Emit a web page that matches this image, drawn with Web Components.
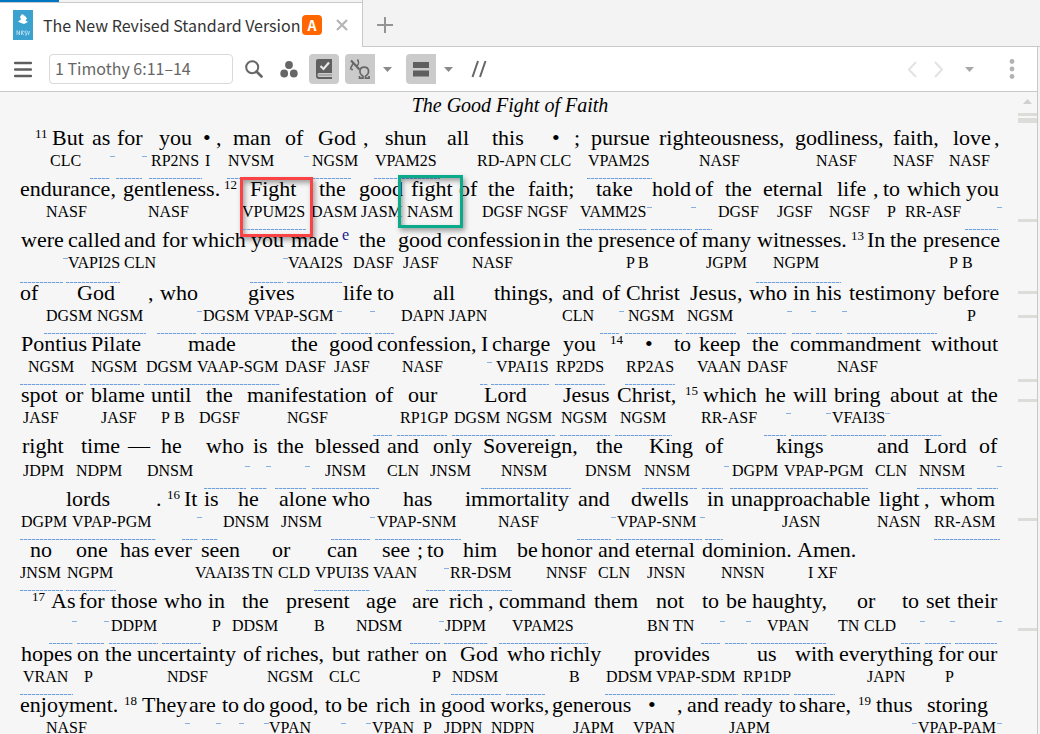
<!DOCTYPE html>
<html lang="en">
<head>
<meta charset="utf-8">
<title>The New Revised Standard Version</title>
<style>
  html,body{
    height:100%;
    margin:0;
  }
  body{
    background:#f3f3f3;
    font-family:"Noto Sans CJK SC","Noto Sans",sans-serif;
    color:#333;
    overflow:hidden;
  }
</style>
</head>
<body>
<reader-window>
  <reader-tab slot="tabs" badge="A">The New Revised Standard Version</reader-tab>
  <reader-toolbar slot="toolbar" reference="1 Timothy 6:11–14"></reader-toolbar>
  <bible-passage heading="The Good Fight of Faith"></bible-passage>
  <scroll-gutter slot="gutter"></scroll-gutter>
</reader-window>

<script>
const icons={
  menu:`<svg width="18" height="17"><path d="M1 2h16M1 8.500h16M1 15h16" stroke="#5f5f5f" stroke-width="2.400" stroke-linecap="round"/></svg>`,
  search:`<svg width="18" height="18" fill="none" stroke="#666"><circle cx="7.2" cy="7.2" r="6" stroke-width="2"/><path d="M11.5 11.5L16.5 16.5" stroke-width="2.6" stroke-linecap="round"/></svg>`,
  dots:`<svg width="18" height="18" fill="#666"><circle cx="9" cy="5" r="3.9"/><circle cx="4.2" cy="13.5" r="3.9"/><circle cx="13.8" cy="13.5" r="3.9"/></svg>`,
  book:`<svg width="18" height="22"><path d="M3 1H17V15H4Q2.5 15 2.5 17T4 19H17V21H4Q1 21 1 18V3Q1 1 3 1Z" fill="#5f5f5f"/><path d="M3.5 17H17" stroke="#8a8a8a" stroke-width="1"/><path d="M5.5 8L8.5 11L14 4.5" fill="none" stroke="#e6e6e6" stroke-width="2.2"/></svg>`,
  lang:`<svg width="22" height="22" fill="none" stroke="#666"><path d="M2 2.5L10.5 11.5" stroke-width="2.2"/><path d="M1.5 11.5C1.5 8 4 8 4 4.5" stroke-width="1.6"/><path d="M7.5 8C10 6.5 10.5 5 8.5 1.5M2 11.5H4" stroke-width="1.6"/><path d="M10.5 18V20.2H14V18.2C9.5 15.5 10 9.2 15.2 9.2S21 15.5 16.5 18.2V20.2H20V18" stroke-width="1.7"/></svg>`,
  split:`<svg width="16" height="16" fill="#5f5f5f"><path d="M0 1h16v6H0zM0 9.500h16v6H0z"/></svg>`,
  slashes:`<svg width="16" height="18" stroke="#666" stroke-width="2"><path d="M1.500 17L7 1M9 17L14.500 1"/></svg>`,
  caret:`<svg width="9" height="5"><path d="M0 0H9L4.500 5Z" fill="currentColor"/></svg>`,
  back:`<svg width="9" height="17"><path d="M8 1L1 8.500L8 16" fill="none" stroke="#e3e3e3" stroke-width="2"/></svg>`,
  forward:`<svg width="9" height="17"><path d="M1 1L8 8.500L1 16" fill="none" stroke="#e3e3e3" stroke-width="2"/></svg>`,
  more:`<svg width="6" height="20" fill="#b3b3b3"><circle cx="3" cy="2.500" r="2.400"/><circle cx="3" cy="10" r="2.400"/><circle cx="3" cy="17.500" r="2.400"/></svg>`,
  close:`<svg width="12" height="12"><path d="M1 1L11 11M11 1L1 11" stroke="#b5b5b5" stroke-width="2.200"/></svg>`,
  plus:`<svg width="16" height="16"><path d="M8 0V16M0 8H16" stroke="#949494" stroke-width="2"/></svg>`
};

// x positions are in units of the text column, which runs from 20 to 1000
const COLUMN_START=20;
const COLUMN_END=1000;

// "^" is a verse number, "~" a footnote, "_" a link mark in the tag row
const lines=[
  {
    rules:"",
    words:"35:^11 52:But 92:as 117:for 159:you 203:• 216:, 233:man 285:of 318:God 363:, 385:shun 447:all 492:this 552:• 574:; 591:pursue 659:righteousness, 795:godliness, 893:faith, 953:love 994:,",
    tags:"50:CLC 110:_ 142:_ 151:RP2NS 205:I 228:NVSM 304:_ 312:NGSM 375:VPAM2S 477:RD-APN 540:CLC 588:VPAM2S 699:NASF 816:NASF 893:NASF 949:NASF"
  },
  {
    rules:"90-110 116-142 149-202 227-240 312-351 374-440 587-652",
    words:"20:endurance, 123:gentleness. 224:^12 250:Fight 319:the 359:good 411:fight 459:of 488:the 528:faith; 596:take 652:hold 695:of 725:the 763:eternal 837:life 873:, 883:to 907:which 966:you",
    tags:"46:NASF 148:NASF 242:VPUM2S 311:DASM 361:JASM 407:NASM 482:DGSF 527:NGSF 580:VAMM2S 647:_ 691:_ 718:DGSF 777:JGSF 829:NGSF 887:P 905:RR-ASF 997:_",
    boxes:true
  },
  {
    rules:"243-306 579-647 651-692 695-712 965-998",
    words:"21:were 68:called 124:and 162:for 192:which 251:you 291:made 342:~e 359:the 398:good 447:confession 543:in 566:the 598:presence 679:of 702:many 757:witnesses. 851:^13 867:In 890:the 923:presence",
    tags:"63:_ 68:VAPI2S 124:CLN 283:_ 288:VAAI2S 353:DASF 403:JASF 472:NASF 626:P 638:B 706:JGPM 773:NGPM 949:P 962:B",
    space:"below"
  },
  {
    rules:"20-63 66-120 250-283 287-342 756-841",
    words:"20:of 77:God 148:, 160:who 248:gives 343:life 377:to 433:all 494:things, 562:and 602:of 626:Christ 690:Jesus 737:, 749:who 793:in 816:his 849:testimony 943:before",
    tags:"46:DGSM 97:NGSM 197:_ 203:DGSM 254:VPAP-SGM 337:_ 370:_ 401:DAPN 449:JAPN 562:CLN 619:_ 628:NGSM 687:NGSM 787:_ 811:_ 842:_ 967:P"
  },
  {
    rules:"44-146 157-196 201-337 341-371 375-394 600-619 625-682 686-736 747-786 792-811 816-842 847-937",
    words:"21:Pontius 91:Pilate 188:made 291:the 329:good 377:confession, 481:I 492:charge 563:you 610:^14 645:• 674:to 699:keep 752:the 790:commandment 931:without",
    tags:"28:NGSM 91:NGSM 146:DGSM 197:VAAP-SGM 285:DASF 334:JASF 402:NASF 487:_ 496:VPAI1S 556:RP2DS 626:RP2AS 697:VAAN 747:DASF 837:NASF"
  },
  {
    rules:"20-86 90-140 144-280 480-488 491-549 555-605 625-675",
    words:"21:spot 65:or 91:blame 151:until 206:the 247:manifestation 375:of 408:our 484:Lord 563:Jesus 617:Christ, 685:^15 703:which 765:he 793:will 834:bring 890:about 947:at 971:the",
    tags:"23:JASF 101:JASF 161:P 174:B 199:DGSF 287:NGSF 400:RP1GP 454:DGSM 506:NGSM 561:NGSM 620:NGSM 701:RR-ASF 786:_ 826:_ 832:VFAI3S 885:_"
  },
  {
    rules:"373-392 397-447 452-555 560-610 615-672 764-786 791-827 831-886 890-942",
    words:"22:right 81:time 128:— 161:he 206:who 253:is 277:the 315:blessed 387:and 433:only 483:Sovereign, 596:the 649:King 705:of 776:kings 877:and 924:Lord 979:of",
    tags:"23:JDPM 76:NDPM 147:DNSM 245:_ 266:_ 305:_ 325:JNSM 387:CLN 430:JNSM 501:NNSM 585:DNSM 644:NNSM 724:_ 732:DGPM 784:VPAP-PGM 875:CLN 919:NNSM 997:_",
    space:"between"
  },
  {
    rules:"204-246 251-267 275-306 312-379 481-571 642-697 702-723 730-868 917-972 977-998",
    words:"66:lords 156:. 167:^16 184:It 204:is 238:he 279:alone 332:who 403:has 465:immortality 578:and 631:dwells 707:in 731:unapproachable 879:light 924:, 940:whom",
    tags:"21:DGPM 72:VPAP-PGM 197:_ 223:DNSM 281:JNSM 370:_ 377:VPAP-SNM 498:NASF 611:_ 617:VPAP-SNM 700:_ 782:JASN 877:NASN 934:RR-ASM"
  },
  {
    rules:"20-156 182-198 202-218 331-370 375-461 577-611 616-702 705-723 934-1000",
    words:"30:no 76:one 120:has 154:ever 201:seen 272:or 327:can 382:see 417:; 427:to 463:him 517:be 541:honor 598:and 635:eternal 702:dominion. 797:Amen.",
    tags:"20:JNSM 67:NGPM 195:VAAI3S 252:TN 278:CLD 315:VPUI3S 373:VAAN 444:_ 450:RR-DSM 546:NNSF 598:CLN 647:JNSN 721:NNSN 808:I 817:XF"
  },
  {
    rules:"20-63 66-116 314-370 426-445 449-512",
    words:"32:^17 51:As 79:for 111:those 164:who 208:in 242:the 286:present 366:age 412:are 449:rich 488:, 499:command 594:them 656:not 702:to 726:be 752:haughty, 857:or 902:to 926:set 957:their",
    tags:"72:_ 104:_ 111:DDPM 212:P 232:DDSM 314:B 356:NDSM 439:_ 445:JDPM 512:VPAM2S 647:BN 673:TN 720:_ 746:_ 767:VPAN 838:TN 864:CLD 920:_ 950:_ 997:_",
    space:"between"
  },
  {
    rules:"49-73 77-104 109-158 162-201 410-440 444-488 499-588 701-720 725-747 751-826 901-920 925-951 955-997",
    words:"21:hopes 77:on 105:the 137:uncertainty 243:of 266:riches, 332:but 367:rather 425:on 460:God 507:who 550:richly 634:provides 757:us 795:with 839:everything 938:for 968:our",
    tags:"23:VRAN 84:P 167:NDSF 267:NGSM 329:CLC 432:P 452:NDSM 569:B 606:DDSM 656:VPAP-SDM 743:RP1DP 867:JAPN 945:P"
  },
  {
    rules:"20-73 451-501 506-545 605-738 742-790 794-835",
    words:"20:enjoyment. 124:^18 142:They 189:are 222:to 243:do 269:good, 325:to 347:be 376:rich 419:in 441:good 490:works, 552:generous 648:• 677:, 687:and 724:ready 779:to 799:share, 858:^19 876:thus 927:storing",
    tags:"46:NASF 185:_ 216:_ 239:_ 264:_ 269:VPAN 341:_ 366:_ 372:VPAN 423:P 444:JDPN 491:NDPN 573:JAPM 633:VPAN 729:JAPM 912:_ 918:VPAP-PAM 997:_"
  }
];

class readerWindow extends HTMLElement{
  render(){
    return `
<style>
    :host{
      display:flex;
      flex-direction:column;
      height:100vh;
    }
    .strip{
      display:flex;
      align-items:stretch;
      height:47px;
      box-shadow:inset 0 -1px #c9c9c9;
    }
    .panel{
      flex:1;
      min-height:0;
      display:flex;
      flex-direction:column;
      margin-right:2px;
      border-right:1px solid #c9c9c9;
    }
    main{
      flex:1;
      min-height:0;
      display:flex;
      overflow:hidden;
      background:#f6f6f6;
    }
    .text{
      flex:1;
      min-width:0;
      padding:0 18px 0 20px;
    }
    button{
      width:44px;
      padding:5px 0 0;
      border:0;
      background:none;
    }
</style>
<header class="strip">
  <slot name="tabs"></slot>
  <button aria-label="New tab">${icons.plus}</button>
</header>
<section class="panel">
  <slot name="toolbar"></slot>
  <main>
    <div class="text"><slot></slot></div>
    <slot name="gutter"></slot>
  </main>
</section>
    `
  }
  constructor(){
    super();
    this.shadow=this.attachShadow({mode:'open'});
    this.shadow.innerHTML=this.render();
  }
}

class readerTab extends HTMLElement{
  render(){
    return `
<style>
    :host{
      display:flex;
      flex-direction:column;
      width:363px;
      box-sizing:border-box;
      border-right:1px solid #c9c9c9;
      background:white;
    }
    .accent{
      flex:none;
      height:3px;
      background:linear-gradient(#0077c2,#0077c2) 0 0/59px 2px no-repeat,linear-gradient(#c9c9c9,#c9c9c9) 0 2px/100% 1px no-repeat,#f3f3f3;
    }
    .row{
      flex:1;
      display:flex;
      align-items:center;
      padding:0 14px 0 13px;
    }
    .cover{
      flex:none;
      margin-right:10px;
    }
    .title{
      flex:none;
      font-size:16px;
      line-height:24px;
      white-space:nowrap;
    }
    .badge{
      flex:none;
      width:20px;
      margin:0 14px 0 auto;
      border-radius:4px;
      background:#ff6600;
      color:white;
      font-size:14px;
      font-weight:bold;
      line-height:20px;
      text-align:center;
    }
    button{
      display:flex;
      padding:0;
      border:0;
      background:none;
    }
</style>
<div class="accent"></div>
<div class="row">
  <svg class="cover" width="20" height="30">
    <rect width="20" height="30" fill="#3ba1cf"/>
    <path d="M9 4L12 6L14 8.500L12.500 10.500L15 12L11 14L8 13L5 11.500L8 9.500L7 7Z" fill="white"/>
    <path d="M4 25V20.500L6.500 25V20.500M8.500 25V21H10.500L9 23L11 25M12 25H13.500V23H12V21H13.500M14.500 21L15.500 25L16.500 21" fill="none" stroke="#a8d8ec"/>
  </svg>
  <span class="title"><slot></slot></span>
  <span class="badge">${this.getAttribute("badge")}</span>
  <button aria-label="Close tab">${icons.close}</button>
</div>
    `
  }
  constructor(){
    super();
    this.shadow=this.attachShadow({mode:'open'});
    this.shadow.innerHTML=this.render();
  }
}

class toolButton extends HTMLElement{
  render(){
    return `
<style>
    :host{
      display:flex;
      width:28px;
    }
    :host([size="caret"]){ width:25px; color:#8a8a8a; }
    :host([size="nav"]){ width:26px; }
    :host([size="wide"]){ width:36px; color:#a8a8a8; }
    :host([size="search"]){ width:42px; }
    :host([size="menu"]){ width:46px; }
    :host([size="edge"]){ width:50px; }
    :host([pressed]){ width:30px; margin-left:6px; }
    button{
      flex:1;
      height:30px;
      display:flex;
      align-items:center;
      justify-content:center;
      padding:0;
      border:0;
      background:none;
      color:inherit;
    }
    :host([pressed]) button{
      background:#cbcbcb;
      border-radius:4px;
    }
    :host([pressed="split"]) button{
      border-radius:4px 0 0 4px;
    }
</style>
<button aria-label="${this.getAttribute("label")}">${icons[this.getAttribute("icon")]}</button>
    `
  }
  constructor(){
    super();
    this.shadow=this.attachShadow({mode:'open'});
    this.shadow.innerHTML=this.render();
  }
}

class readerToolbar extends HTMLElement{
  render(){
    return `
<style>
    :host{
      display:flex;
      align-items:center;
      height:44px;
      border-bottom:1px solid #c9c9c9;
      background:white;
    }
    input{
      width:184px;
      height:30px;
      box-sizing:border-box;
      margin-left:3px;
      padding:0 5px 2px;
      border:1px solid #d9d9d9;
      border-radius:4px;
      color:#666;
      font-family:inherit;
      font-size:16px;
    }
    .fill{
      flex:1;
    }
</style>
<tool-button icon="menu" label="Menu" size="menu"></tool-button>
<input type="text" aria-label="Reference" value="${this.getAttribute("reference")}">
<tool-button icon="search" label="Search" size="search"></tool-button>
<tool-button icon="dots" label="Parallel resources"></tool-button>
<tool-button icon="book" label="Visual filters" pressed></tool-button>
<tool-button icon="lang" label="Interlinear" pressed="split"></tool-button>
<tool-button icon="caret" label="Interlinear options" size="caret"></tool-button>
<tool-button icon="split" label="Layout" pressed="split"></tool-button>
<tool-button icon="caret" label="Layout options" size="caret"></tool-button>
<tool-button icon="slashes" label="Compare" size="wide"></tool-button>
<span class="fill"></span>
<tool-button icon="back" label="Back" size="nav"></tool-button>
<tool-button icon="forward" label="Forward" size="nav"></tool-button>
<tool-button icon="caret" label="History" size="wide"></tool-button>
<tool-button icon="more" label="More" size="edge"></tool-button>
    `
  }
  constructor(){
    super();
    this.shadow=this.attachShadow({mode:'open'});
    this.shadow.innerHTML=this.render();
  }
}

class annotationBox extends HTMLElement{
  constructor(){
    super();
    this.shadow=this.attachShadow({mode:'open'});
    this.shadow.innerHTML=`
<style>
    :host{
      display:block;
      position:absolute;
      box-sizing:border-box;
      border:3px solid #fb4346;
      box-shadow:2px 3px 5px rgba(0,0,0,.35),inset 2px 3px 5px rgba(0,0,0,.35);
      left:22.4%;
      top:-1px;
      width:73px;
      height:60px;
    }
    :host([kind="noun"]){
      border-color:#0aab8b;
      left:38.6%;
      top:-3px;
      width:65px;
      height:53px;
    }
</style>`;
  }
}

class interlinearLine extends HTMLElement{
  // lays the cells on fr columns: a gap column, then a cell column, and so on
  track(name,cells){
    let at=COLUMN_START;
    const columns=[];
    cells.forEach(c=>{
      columns.push(c.start-at,c.end-c.start);
      at=c.end;
    });
    columns.push(COLUMN_END-at);
    return `<div class="${name}" style="grid-template-columns:${columns.map(n=>`minmax(0,${n}fr)`).join(" ")}">${
      cells.map((c,i)=>`<span style="grid-column:${i*2+2}">${c.html}</span>`).join(" ")
    }</div>`
  }
  parse(text){
    const cells=text.split(" ").map(t=>{
      const cut=t.indexOf(":");
      return {start:Number(t.slice(0,cut)),html:this.cell(t.slice(cut+1))}
    });
    cells.forEach((c,i)=>{
      c.end=i+1<cells.length?cells[i+1].start:COLUMN_END;
    });
    return cells
  }
  cell(word){
    if(word=="_") return "<i></i>"
    if(word[0]=="^") return `<sup>${word.slice(1)}</sup>`
    if(word[0]=="~") return `<a href="#note-${word.slice(1)}"><sup>${word.slice(1)}</sup></a>`
    return word
  }
  parseRules(text){
    return text.split(" ").filter(Boolean).map(t=>{
      const [start,end]=t.split("-").map(Number);
      return {start,end,html:""}
    })
  }
  render(){
    const line=this.line;
    return `
<style>
    :host{
      display:block;
      position:relative;
      padding-bottom:6px;
    }
    :host([space="below"]){ padding-bottom:8px; }
    :host([space="between"]) .tags{ margin-top:4px; }
    .rules,.words,.tags{
      display:grid;
      white-space:nowrap;
    }
    .rules{
      height:1px;
    }
    .rules span{
      background:repeating-linear-gradient(90deg,#6fa0dd 0 3px,#c3d6ee 3px 4px);
    }
    .words{
      height:20px;
      font-size:22px;
      line-height:20px;
    }
    .tags{
      height:22px;
      margin-top:2px;
      font-size:16px;
      line-height:22px;
    }
    sup{
      font-size:13px;
      line-height:0;
      vertical-align:7px;
    }
    a{
      color:#1a1a8c;
      text-decoration:none;
    }
    a sup{
      font-size:16px;
    }
    i{
      display:block;
      width:5px;
      height:1px;
      margin-top:6px;
      background:#86b0e4;
    }
</style>
${this.track("rules",this.parseRules(line.rules))}
${this.track("words",this.parse(line.words))}
${this.track("tags",this.parse(line.tags))}
${line.boxes?`<annotation-box></annotation-box><annotation-box kind="noun"></annotation-box>`:""}
    `
  }
  constructor(){
    super();
    this.shadow=this.attachShadow({mode:'open'});
  }
  connectedCallback(){
    this.line=lines[Number(this.getAttribute("index"))];
    if(this.line.space) this.setAttribute("space",this.line.space);
    this.shadow.innerHTML=this.render();
  }
}

class biblePassage extends HTMLElement{
  render(){
    return `
<style>
    :host{
      display:block;
      font-family:"Liberation Serif",serif;
      color:#000;
    }
    h2{
      margin:0;
      padding-top:1px;
      font-size:20px;
      font-weight:normal;
      font-style:italic;
      line-height:24px;
      height:35px;
      box-sizing:border-box;
      text-align:center;
    }
</style>
<h2>${this.getAttribute("heading")}</h2>
${lines.map((l,i)=>`<interlinear-line index="${i}"></interlinear-line>`).join("")}
    `
  }
  constructor(){
    super();
    this.shadow=this.attachShadow({mode:'open'});
    this.shadow.innerHTML=this.render();
  }
}

class scrollGutter extends HTMLElement{
  constructor(){
    super();
    // y and height of every hit in the scroll track
    this.hits=[[21,3],[26,5],[127,3],[199,3],[223,3],[287,3],[307,3],[426,3],[536,3]];
    this.shadow=this.attachShadow({mode:'open'});
    this.shadow.innerHTML=`
<style>
    :host{
      display:block;
      flex:none;
      width:19px;
    }
</style>
<svg width="19" height="640" fill="#dcdcd8">
  <path d="M5 12L9.500 7L14 12Z" fill="#d0d0d0"/>
  ${this.hits.map(h=>`<rect y="${h[0]}" width="19" height="${h[1]}"/>`).join("")}
</svg>`;
  }
}

window.customElements.define('annotation-box',annotationBox);
window.customElements.define('interlinear-line',interlinearLine);
window.customElements.define('bible-passage',biblePassage);
window.customElements.define('scroll-gutter',scrollGutter);
window.customElements.define('tool-button',toolButton);
window.customElements.define('reader-toolbar',readerToolbar);
window.customElements.define('reader-tab',readerTab);
window.customElements.define('reader-window',readerWindow);
</script>
</body>
</html>
